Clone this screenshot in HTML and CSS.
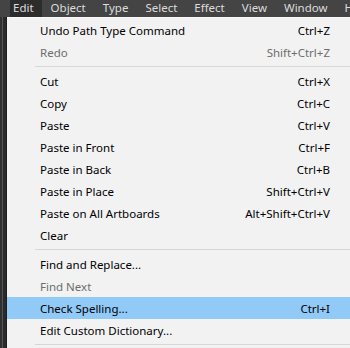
FILE: index.html
```html
<!DOCTYPE html>
<html lang="en">
<head>
    <meta charset="UTF-8">
    <meta name="viewport" content="width=device-width, initial-scale=1.0">
    <title>Edit menu</title>
    <link rel="stylesheet" href="styles.css">
</head>
<body>

    <!-- Top menu bar -->
    <div class="menubar">
        <span class="menubar-item active">Edit</span>
        <span class="menubar-item">Object</span>
        <span class="menubar-item">Type</span>
        <span class="menubar-item">Select</span>
        <span class="menubar-item">Effect</span>
        <span class="menubar-item">View</span>
        <span class="menubar-item">Window</span>
        <span class="menubar-item">Help</span>
    </div>

    <div class="workspace">
        <div class="side-strip"></div>

        <!-- Dropdown -->
        <div class="dropdown">
            <div class="menu-row"><span class="label">Undo Path Type Command</span><span class="shortcut">Ctrl+Z</span></div>
            <div class="menu-row disabled"><span class="label">Redo</span><span class="shortcut">Shift+Ctrl+Z</span></div>
            <div class="separator"></div>
            <div class="menu-row"><span class="label">Cut</span><span class="shortcut">Ctrl+X</span></div>
            <div class="menu-row"><span class="label">Copy</span><span class="shortcut">Ctrl+C</span></div>
            <div class="menu-row"><span class="label">Paste</span><span class="shortcut">Ctrl+V</span></div>
            <div class="menu-row"><span class="label">Paste in Front</span><span class="shortcut">Ctrl+F</span></div>
            <div class="menu-row"><span class="label">Paste in Back</span><span class="shortcut">Ctrl+B</span></div>
            <div class="menu-row"><span class="label">Paste in Place</span><span class="shortcut">Shift+Ctrl+V</span></div>
            <div class="menu-row"><span class="label">Paste on All Artboards</span><span class="shortcut">Alt+Shift+Ctrl+V</span></div>
            <div class="menu-row"><span class="label">Clear</span><span class="shortcut"></span></div>
            <div class="separator"></div>
            <div class="menu-row"><span class="label">Find and Replace...</span><span class="shortcut"></span></div>
            <div class="menu-row disabled"><span class="label">Find Next</span><span class="shortcut"></span></div>
            <div class="menu-row hover"><span class="label">Check Spelling...</span><span class="shortcut">Ctrl+I</span></div>
            <div class="menu-row"><span class="label">Edit Custom Dictionary...</span><span class="shortcut"></span></div>
            <div class="separator"></div>
        </div>
    </div>

</body>
</html>
```

FILE: styles.css
```css
body {
    margin: 0;
    padding: 0;
    width: 350px;
    height: 348px;
    overflow: hidden;
    background-color: #2f2f2f;
    font-family: "Noto Sans", "Open Sans", sans-serif;
    font-size: 11.5px;
}

/* Dark application menu bar */
.menubar {
    display: flex;
    gap: 6px;
    height: 17px;
    padding-left: 10px;
    background-color: #444444;
    color: #dcdcdc;
    white-space: nowrap;
    overflow: hidden;
}

.menubar-item {
    padding: 0 8px 0 3px;
    line-height: 16px;
}

.menubar-item.active {
    background-color: #2c2c2c;
}

.workspace {
    display: flex;
    height: 331px;
}

/* Thin panel edge on the left */
.side-strip {
    width: 7px;
    background: linear-gradient(to right, #303030 0, #303030 2px, #555555 2px, #555555 3px, #2a2a2a 3px, #2a2a2a 6px, #1e1e1e 6px);
}

.dropdown {
    flex: 1;
    background-color: #f2f2f2;
    padding-top: 1px;
    color: #000000;
    border-top: 1px solid #fafafa;
}

.menu-row {
    display: flex;
    justify-content: space-between;
    height: 21px;
    line-height: 22px;
    padding: 1px 20px 0 33px;
    white-space: nowrap;
}

.menu-row.disabled {
    color: #6d6d6d;
}

.menu-row.hover {
    background-color: #91c9f7;
}

.separator {
    height: 7px;
    margin-left: 28px;
    background: linear-gradient(#f2f2f2 0, #f2f2f2 3px, #d7d7d7 3px, #d7d7d7 4px, #f2f2f2 4px);
}
```
